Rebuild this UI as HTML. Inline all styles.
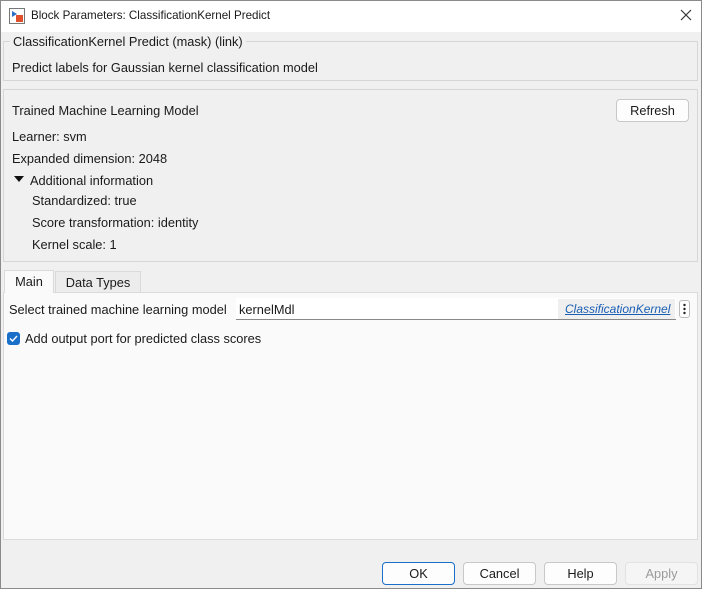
<!DOCTYPE html>
<html><head><style>
*{box-sizing:border-box;margin:0;padding:0}
body{width:702px;height:589px;overflow:hidden;background:#f0f0f0;font-family:"Liberation Sans",sans-serif;font-size:12.8px;color:#1a1a1a;position:relative}
.a{position:absolute;white-space:nowrap}
.win{position:absolute;left:0;top:0;width:702px;height:589px;border:1px solid #8a8a8a}
.btn{position:absolute;height:23px;border:1px solid #c8c8c8;border-radius:4px;background:#fdfdfd;text-align:center;line-height:21px}
</style></head><body>
<div class="win"></div>
<div class="a" style="left:1px;top:1px;width:700px;height:31px;background:#fff"></div>
<svg class="a" style="left:9px;top:8px" width="16" height="16"><rect x="0.5" y="0.5" width="15" height="15" fill="#fff" stroke="#777"/><path d="M3 3 L8 6 L3 9Z" fill="#2a6fc9"/><rect x="7" y="7" width="7" height="7" fill="#e0502a"/></svg>
<div class="a" style="left:31px;top:9px;font-size:11.6px">Block Parameters: ClassificationKernel Predict</div>
<svg class="a" style="left:680px;top:9px" width="12" height="12"><path d="M1 1L11 11M11 1L1 11" stroke="#333" stroke-width="1.2"/></svg>

<div class="a" style="left:3px;top:41px;width:695px;height:40px;border:1px solid #d6d6d6"></div>
<div class="a" style="left:10px;top:34px;background:#f0f0f0;padding:0 3px">ClassificationKernel Predict (mask) (link)</div>
<div class="a" style="left:12px;top:60px">Predict labels for Gaussian kernel classification model</div>

<div class="a" style="left:3px;top:89px;width:695px;height:173px;border:1px solid #d6d6d6"></div>
<div class="a" style="left:12px;top:103px">Trained Machine Learning Model</div>
<div class="btn" style="left:616px;top:99px;width:73px">Refresh</div>
<div class="a" style="left:12px;top:129px">Learner: svm</div>
<div class="a" style="left:12px;top:151px">Expanded dimension: 2048</div>
<svg class="a" style="left:14px;top:176px" width="10" height="8"><path d="M0 0H10L5 6Z" fill="#111"/></svg>
<div class="a" style="left:30px;top:173px">Additional information</div>
<div class="a" style="left:32px;top:193px">Standardized: true</div>
<div class="a" style="left:32px;top:215px">Score transformation: identity</div>
<div class="a" style="left:32px;top:237px">Kernel scale: 1</div>

<div class="a" style="left:3px;top:292px;width:695px;height:248px;background:#fafafa;border:1px solid #dadada"></div>
<div class="a" style="left:4px;top:270px;width:50px;height:23px;background:#fafafa;border:1px solid #dadada;border-bottom:none;text-align:center;line-height:22px">Main</div>
<div class="a" style="left:55px;top:271px;width:86px;height:21px;background:#ececec;border:1px solid #dadada;border-bottom:none;text-align:center;line-height:21px">Data Types</div>
<div class="a" style="left:9px;top:302px">Select trained machine learning model</div>
<div class="a" style="left:236px;top:298px;width:440px;height:22px;background:#fff;border-bottom:1px solid #888"></div>
<div class="a" style="left:239px;top:302px">kernelMdl</div>
<div class="a" style="left:558px;top:299px;width:117px;height:20px;background:#efefef"></div>
<div class="a" style="left:565px;top:302px;color:#1a5fb4;text-decoration:underline;font-style:italic;font-size:12px">ClassificationKernel</div>
<div class="a" style="left:679px;top:300px;width:11px;height:18px;border:1px solid #bbb;border-radius:3px;background:#fff"></div>
<svg class="a" style="left:682px;top:303px" width="5" height="12"><circle cx="2.5" cy="2" r="1.2" fill="#222"/><circle cx="2.5" cy="6" r="1.2" fill="#222"/><circle cx="2.5" cy="10" r="1.2" fill="#222"/></svg>
<svg class="a" style="left:7px;top:332px" width="13" height="13"><rect width="13" height="13" rx="3" fill="#1a6fc9"/><path d="M3 6.5L5.5 9L10 4" stroke="#fff" stroke-width="1.4" fill="none"/></svg>
<div class="a" style="left:25px;top:331px">Add output port for predicted class scores</div>

<div class="btn" style="left:382px;top:562px;width:73px;border:1px solid #1a6fc9">OK</div>
<div class="btn" style="left:463px;top:562px;width:73px">Cancel</div>
<div class="btn" style="left:544px;top:562px;width:73px">Help</div>
<div class="btn" style="left:625px;top:562px;width:73px;color:#9a9a9a;background:#f5f5f5;border-color:#e2e2e2">Apply</div>
</body></html>
